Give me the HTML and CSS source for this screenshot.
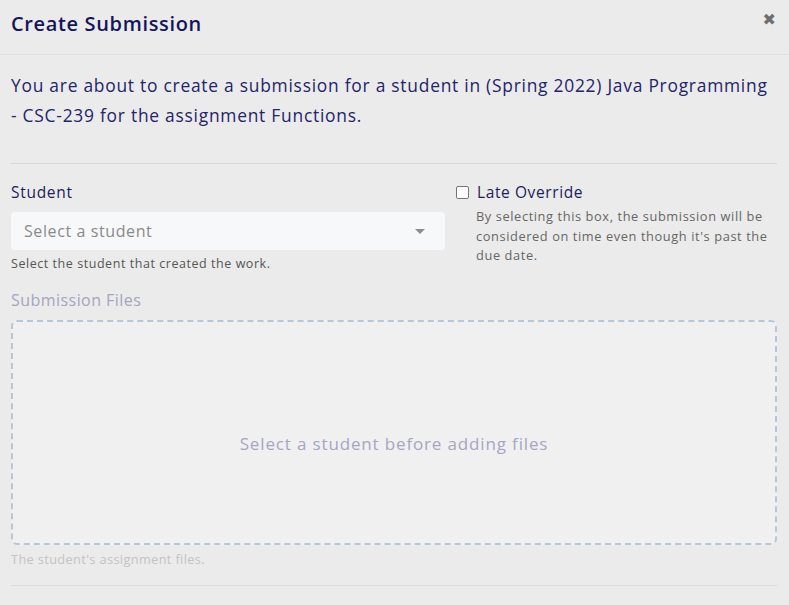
FILE: index.html
```html
<!DOCTYPE html>
<html lang="en">
<head>
<meta charset="utf-8">
<title>Create Submission</title>
<link rel="stylesheet" href="styles.css">
</head>
<body>
<div class="modal">
  <header class="modal-header">
    <h1 class="modal-title">Create Submission</h1>
    <button class="close" type="button" aria-label="Close">&#10006;</button>
  </header>
  <div class="modal-body">
    <p class="intro">You are about to create a submission for a student in (Spring 2022) Java Programming - CSC-239 for the assignment Functions.</p>
    <hr class="divider">
    <div class="row">
      <div class="col-left">
        <label class="field-label">Student</label>
        <div class="select">
          <span class="placeholder">Select a student</span>
          <span class="caret"></span>
        </div>
        <div class="help">Select the student that created the work.</div>
      </div>
      <div class="col-right">
        <label class="check">
          <span class="box"></span>
          <span class="check-label">Late Override</span>
        </label>
        <div class="help help-right">By selecting this box, the submission will be considered on time even though it's past the due date.</div>
      </div>
    </div>
    <div class="files-label">Submission Files</div>
    <div class="dropzone">Select a student before adding files</div>
    <div class="files-help">The student's assignment files.</div>
    <hr class="divider divider-bottom">
  </div>
</div>
</body>
</html>
```
FILE: styles.css
```css
* { box-sizing: border-box; }
html, body { margin: 0; padding: 0; }
body {
  background: #ebebeb;
  font-family: "Open Sans", "Noto Sans", sans-serif;
  color: #1c1c5a;
  width: 789px;
  height: 605px;
  overflow: hidden;
  letter-spacing: 0.6px;
}
.modal { width: 789px; }
.modal-header {
  height: 55px;
  border-bottom: 1px solid #dfe3e8;
  display: flex;
  align-items: center;
  justify-content: space-between;
  padding: 0 11px 8px 11px;
}
.modal-title {
  margin: 0;
  font-size: 20px;
  font-weight: 600;
  color: #15155a;
  letter-spacing: 0.65px;
}
.close {
  border: 0;
  background: none;
  padding: 0;
  color: #6e6e6e;
  font-size: 16px;
  line-height: 1;
  margin-top: -6px;
  margin-right: 2px;
  font-family: "DejaVu Sans", sans-serif;
}
.modal-body { padding: 0 12px 0 11px; }
.intro {
  margin: 15px 0 0 0;
  font-size: 17.4px;
  line-height: 30px;
  color: #24246a;
  letter-spacing: 0.75px;
}
.divider {
  border: 0;
  border-top: 1px solid #d6d6d6;
  margin: 33px 0 0 0;
}
.row {
  display: grid;
  grid-template-columns: 434px 1fr;
  column-gap: 11px;
  margin-top: 17px;
}
.field-label {
  display: block;
  font-size: 15.5px;
  font-weight: 500;
  color: #1c1c5a;
  line-height: 22px;
  letter-spacing: 0.7px;
}
.select {
  margin-top: 9px;
  height: 38px;
  background: #f7f8fa;
  border-radius: 4px;
  display: flex;
  align-items: center;
  justify-content: space-between;
  padding: 0 20px 0 13px;
}
.placeholder { font-size: 16px; color: #8a8a8a; }
.caret {
  width: 0; height: 0;
  border-left: 5px solid transparent;
  border-right: 5px solid transparent;
  border-top: 5px solid #8d8d8d;
}
.help {
  font-size: 12.5px;
  color: #555;
  margin-top: 5px;
  line-height: 18px;
  letter-spacing: 0.55px;
}
.check {
  display: flex;
  align-items: center;
  gap: 8px;
  line-height: 22px;
}
.box {
  width: 13px; height: 13px;
  border: 1px solid #767676;
  border-radius: 2px;
  background: #fff;
}
.check-label { font-size: 15.5px; font-weight: 500; color: #1c1c5a; }
.help-right {
  margin-top: 4px;
  padding-left: 20px;
  font-size: 12.8px;
  line-height: 19.5px;
  color: #666;
  letter-spacing: 0.6px;
}
.files-label {
  margin-top: 16px;
  font-size: 16px;
  color: #a5a5bd;
  line-height: 22px;
  letter-spacing: 0.45px;
}
.dropzone {
  margin-top: 9px;
  height: 225px;
  border: 2px dashed #b6c7dc;
  border-radius: 6px;
  background: #f0f0f0;
  display: flex;
  align-items: center;
  justify-content: center;
  padding-top: 22px;
  font-size: 17px;
  color: #a6a6c2;
  letter-spacing: 0.85px;
}
.files-help {
  margin-top: 5px;
  font-size: 12.8px;
  color: #c3c3c3;
  line-height: 18px;
  letter-spacing: 0.35px;
}
.divider-bottom { margin-top: 17px; border-top-color: #dcdcdc; }
```
